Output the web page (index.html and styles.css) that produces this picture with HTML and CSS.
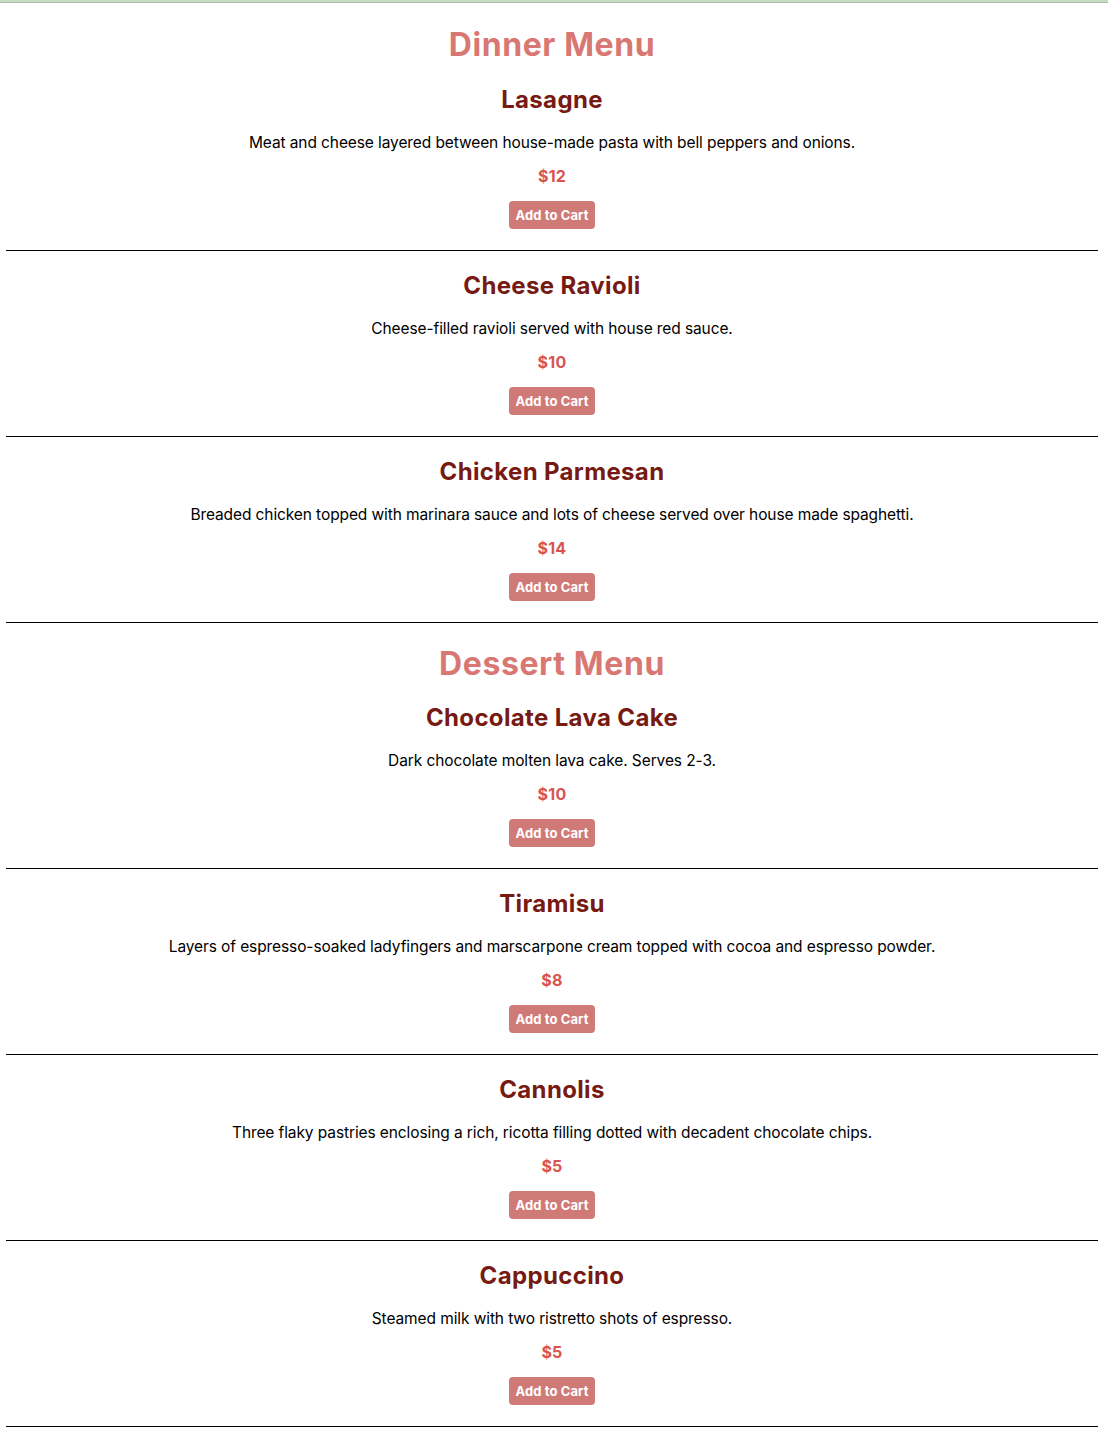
FILE: index.html
```html
<!DOCTYPE html>
<html lang="en">
<head>
<meta charset="utf-8">
<title>Menu</title>
<link rel="stylesheet" href="styles.css">
</head>
<body>
<div class="topbar"></div>
<main class="page">
  <section class="menu">
    <h1 class="menu-title">Dinner Menu</h1>
    <div class="item">
      <h2 class="item-name">Lasagne</h2>
      <p class="item-desc">Meat and cheese layered between house-made pasta with bell peppers and onions.</p>
      <p class="item-price">$12</p>
      <button class="add-btn">Add to Cart</button>
    </div>
    <div class="item">
      <h2 class="item-name">Cheese Ravioli</h2>
      <p class="item-desc">Cheese-filled ravioli served with house red sauce.</p>
      <p class="item-price">$10</p>
      <button class="add-btn">Add to Cart</button>
    </div>
    <div class="item">
      <h2 class="item-name">Chicken Parmesan</h2>
      <p class="item-desc">Breaded chicken topped with marinara sauce and lots of cheese served over house made spaghetti.</p>
      <p class="item-price">$14</p>
      <button class="add-btn">Add to Cart</button>
    </div>
  </section>
  <section class="menu">
    <h1 class="menu-title">Dessert Menu</h1>
    <div class="item">
      <h2 class="item-name">Chocolate Lava Cake</h2>
      <p class="item-desc">Dark chocolate molten lava cake. Serves 2-3.</p>
      <p class="item-price">$10</p>
      <button class="add-btn">Add to Cart</button>
    </div>
    <div class="item">
      <h2 class="item-name">Tiramisu</h2>
      <p class="item-desc">Layers of espresso-soaked ladyfingers and marscarpone cream topped with cocoa and espresso powder.</p>
      <p class="item-price">$8</p>
      <button class="add-btn">Add to Cart</button>
    </div>
    <div class="item">
      <h2 class="item-name">Cannolis</h2>
      <p class="item-desc">Three flaky pastries enclosing a rich, ricotta filling dotted with decadent chocolate chips.</p>
      <p class="item-price">$5</p>
      <button class="add-btn">Add to Cart</button>
    </div>
    <div class="item">
      <h2 class="item-name">Cappuccino</h2>
      <p class="item-desc">Steamed milk with two ristretto shots of espresso.</p>
      <p class="item-price">$5</p>
      <button class="add-btn">Add to Cart</button>
    </div>
  </section>
</main>
</body>
</html>
```

FILE: styles.css
```css
html, body {
  margin: 0;
  padding: 0;
  background: #ffffff;
}

body {
  font-family: Inter, "Noto Sans", "Liberation Sans", sans-serif;
  color: #000000;
}

.topbar {
  height: 2px;
  background: #c6dbc1;
  border-bottom: 1px solid #a9bba6;
}

.page {
  margin: 0 10px 20px 6px;
}

.menu {
  display: flex;
  flex-direction: column;
}

.menu-title {
  margin: 22px 0 0;
  font-size: 32px;
  line-height: 40px;
  font-weight: 700;
  color: #d97873;
  text-align: center;
  letter-spacing: 0.6px;
}

.menu + .menu .menu-title {
  margin-top: 21px;
}

.item {
  display: flex;
  flex-direction: column;
  align-items: center;
  border-bottom: 1px solid #000000;
  text-align: center;
}

.item-name {
  margin: 20px 0 0;
  font-size: 24px;
  line-height: 30px;
  font-weight: 700;
  color: #761a12;
  letter-spacing: 0.35px;
}

.menu + .menu .menu-title + .item .item-name {
  margin-top: 19px;
}

.item-desc {
  margin: 18px 0 0;
  font-size: 15.5px;
  line-height: 20px;
  letter-spacing: -0.1px;
}

.item-price {
  margin: 13px 0 0;
  font-size: 16px;
  line-height: 20px;
  font-weight: 700;
  color: #d9544f;
  letter-spacing: 0.2px;
}

.add-btn {
  margin: 15px 0 21px;
  height: 28px;
  width: 86px;
  padding: 0;
  border: none;
  border-radius: 4px;
  background: #d07a78;
  color: #ffffff;
  font-family: inherit;
  font-size: 13px;
  font-weight: 700;
  letter-spacing: 0.1px;
}
```
